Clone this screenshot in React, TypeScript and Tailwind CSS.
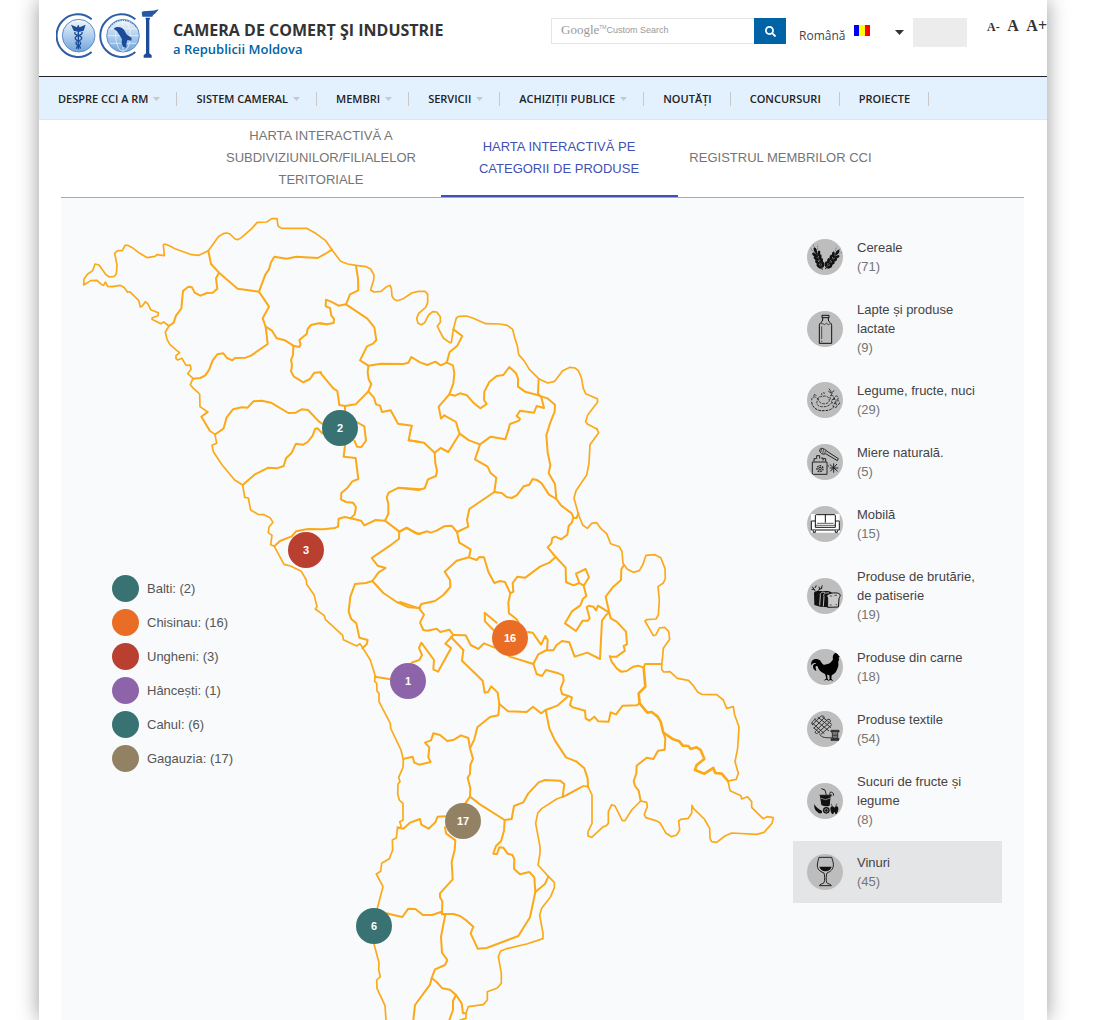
import { useState } from "react";
import type { ReactNode } from "react";
import { FaSearch } from "react-icons/fa";

interface MapSheet {
  id: string;
  transform: string;
  outline: string[];
  borders: string[];
}

// Country outline and district borders, drawn sheet by sheet at three times the map size
const SHEETS: MapSheet[] = [
  {
    id: "north-west",
    transform: "translate(14 12) scale(0.33333)",
    outline: [
      "M400 122 L372 136 350 134 300 116 283 107 270 102 265 104 268 137 246 134 240 139 217 143 194 130 172 113 158 106 150 106 142 122 128 122 119 130 126 165 124 192 118 199 103 201 92 193 72 165 60 162 53 182 38 192 27 207 26 225 47 212 66 211 80 224 86 226 91 216 98 229 112 230 135 226 147 232 158 247 164 245 191 271 196 291 202 288 211 275 219 282 227 299 250 308 249 317 231 324 231 328 257 341 266 336 282 348",
      "M282 348 L271 366 276 388 285 404 305 421 314 428 303 437 303 446 308 450 321 445 333 466 346 465 348 478 338 491 354 505 346 524 356 536 374 552 375 590 398 606 379 620 403 660",
      "M400 122 L430 80 447 70 456 69 465 72 480 87 489 89 500 82 530 56 547 37 575 36 590 26 606 26 609 48 620 55 695 55 722 70 752 92 771 119",
    ],
    borders: [
      "M771 119 L755 129 728 144 664 140 635 146 598 140 588 157 582 178 571 194 552 245",
      "M400 122 L408 162 432 188 488 236 552 245 582 290 563 325 572 350 578 402 528 437 512 443 480 444 472 451 456 444 445 430 427 433 413 451 403 478 391 496 376 504 354 506",
      "M432 188 L423 205 427 236 413 248 396 249 376 257 359 248 351 232 340 230 324 243 319 296 303 317 296 338 282 348",
      "M572 350 L591 362 605 385 630 391 655 407 673 411 677 403 673 390 695 372 698 357 708 345 731 340 755 343",
      "M655 407 L654 435 648 450 651 465 648 484 657 500 685 517 705 507 718 488 738 487",
      "M440 660 L446 655 455 622 474 598 500 592 518 593 535 574 561 572 588 578 640 609 662 608 680 598 699 600 732 635 745 643",
    ],
  },
  {
    id: "north-east",
    transform: "translate(259 12) scale(0.33333)",
    outline: [
      "M36 120 L62 154 83 162 108 166 138 170 152 177 162 195 161 210 152 240 162 246 183 244 200 230 210 226 214 235 216 258 222 268 232 272 250 266 275 249 295 244 315 244 323 253 323 278 317 292 296 310 290 325 294 340 304 344 314 338 326 315 338 305 350 306 361 320 361 337 352 349 370 384 389 398 394 398 400 358 409 324 416 319 440 318 460 325 497 341 540 342 562 346 578 358 584 383 592 407 596 434 612 452 628 478 656 506 683 519 704 514 728 482 750 472 765 474 775 482 784 502 790 535 797 551 832 566 833 576 803 615 797 635 802 642 832 658",
    ],
    borders: [
      "M108 168 L114 205 115 241 90 253 78 283 56 287 33 275 18 269 17 289 30 294 34 317 42 327 41 339 20 343 0 340",
      "M78 283 L142 326 163 352 169 390 159 401 141 409 120 451 145 467 183 461 250 462 265 458 274 441 300 457 322 465 346 455 362 466 380 458 389 426 412 407 427 378 400 358",
      "M380 458 L399 466 403 490 400 520 388 553 405 557 420 550 441 556 462 580 481 595 500 582 492 570 493 545 508 516 530 498 550 495 568 471 588 490 594 505 594 530 615 545 655 556 682 565 705 584 704 605 690 640 684 660",
      "M656 506 L654 550 664 562 672 594 650 588 642 608 600 602 590 618 600 626 597 632 570 642 565 660",
      "M388 553 L356 590 363 626 373 616 408 636 415 660",
      "M145 467 L143 487 146 508 154 522 145 544 107 583 75 588 58 585 52 543 40 535 0 487",
      "M145 544 L162 563 168 583 180 587 186 606 212 601 234 641 276 647 272 660",
      "M75 588 V602",
    ],
  },
  {
    id: "west",
    transform: "translate(129 202) scale(0.33333)",
    outline: [
      "M53 37 L34 50 60 93 75 103 80 130 66 136 70 155 96 194 134 240 158 255 164 292 175 294 182 330 204 343 222 344 240 353 249 367 237 381 235 398 246 406 242 434 253 439 282 493 302 498 334 514 349 540 350 553 372 584 381 620 376 627 403 647 406 658 458 706 460 719 500 738 510 731 541 780",
    ],
    borders: [
      "M75 103 L95 90",
      "M397 100 L383 85 375 87 368 107 353 126 340 134 318 131 304 160 288 175 281 198 261 205 235 203 195 223 158 255",
      "M500 66 L523 79 528 122 514 141 501 140 493 122",
      "M465 136 L461 170 497 174 505 237 487 244 472 264 454 279 453 298 468 306 489 308 498 322 494 343 482 355 464 351 446 356 444 380 434 384 400 388 354 387 318 394 305 409 270 423 253 439",
      "M482 355 L513 362 523 376 557 360 585 362 595 342 595 312 590 292 596 278 626 263 690 268",
      "M585 362 L628 395 627 416 600 437 545 474 563 497 587 504 566 517 547 543 528 549 495 552 481 590 476 635 483 656 499 670 508 713 533 720 530 733 517 745",
      "M547 543 L580 579 620 606 656 622 690 624",
      "M628 395 L650 383 675 399 690 402",
      "M662 90 L656 121 690 126",
    ],
  },
  {
    id: "center",
    transform: "translate(339 202) scale(0.33333)",
    outline: [
      "M590 86 L596 98 570 134 567 190 560 225 528 272 522 295 536 345 548 375 562 385 575 370 590 368 602 385 620 401 632 431 658 440 666 455 669 490 682 508 700 517 718 512 728 495 738 466 765 464 782 473 795 505 796 535 790 549 774 560 778 600 775 645 768 657 740 659 735 663 760 707 768 704 778 684 794 682 806 694 809 718 790 745 787 780",
    ],
    borders: [
      "M26 121 L72 128 104 158 122 144 145 156 179 101 175 90",
      "M104 158 L106 190 111 212 108 228 84 238 74 265 55 270 0 264",
      "M179 101 L207 121 240 133 225 178 263 200 271 218 289 233 283 276 208 327 201 360 205 380 171 396 155 377 132 379 110 392 92 398 82 394 55 402 20 384 0 394",
      "M240 133 L272 110 316 118 325 90",
      "M444 90 L439 105 443 157 451 195 446 220 465 252 469 297",
      "M283 276 L305 279 320 291 335 294 350 286 371 259 388 254 398 237 413 241 425 250 447 284 469 297 483 316 515 340 521 354 530 354 535 340",
      "M519 354 L516 367 506 378 502 404 484 418 466 410 457 414 454 430 443 442 467 471 448 488 420 500 376 533 352 530 338 549 340 575 331 580 325 608 327 640 350 658 356 668",
      "M467 471 L497 503 498 546 520 556 538 549 528 521 557 507 567 532 551 557 559 588 549 596 541 616 516 634 495 670 528 693 548 662 564 662 569 655 560 622 566 617 580 620 588 631 594 617 628 638 617 590 640 560 663 540 664 508 672 495",
      "M538 549 L551 557",
      "M171 396 L178 428 212 448 207 472 170 482 134 515 150 540 151 561 130 585 105 603 64 612 57 625 0 606",
      "M207 472 L230 480 238 471 252 472 265 515 283 549 300 543 315 546 331 580",
      "M57 625 L72 644 60 668 70 690 82 692 110 686 121 696 148 689 160 705 136 731 153 744",
      "M160 705 L197 706 212 735 235 747 252 730 284 743",
      "M153 711 L190 750",
      "M280 690 L255 664 254 638 290 668",
      "M384 696 L398 698 423 734 436 708 443 720 441 751 460 751 470 735 486 723 508 727 524 770 562 758 600 777 606 662 618 645 628 638 632 655 650 665 678 695 681 733 671 738 675 752 650 770 630 770",
    ],
  },
  {
    id: "south",
    transform: "translate(299 442) scale(0.33333)",
    outline: [
      "M31 60 L45 105 44 124 50 130 51 153 57 160 57 185 91 250 92 265 123 330 130 360 129 382 116 412 120 425 114 432 113 462 118 480 129 491 129 541 119 545 124 560 112 567 109 594 97 600 98 630 88 656 65 670 62 694 49 702 69 740 52 805",
      "M42 912 L57 968 56 990 61 1010 50 1020 51 1045 75 1097 78 1140",
      "M660 443 L620 466 590 477 545 506 533 520 527 550 540 620 540 640 534 675 565 709 583 727 583 743 572 770 545 805 539 825 549 880 549 896 500 912 440 926 422 933 415 950 424 1000 424 1030 412 1044 382 1055 382 1080 370 1094 325 1100 318 1120 318 1135 300 1140",
    ],
    borders: [
      "M45 110 L92 118",
      "M155 68 L178 60 186 45 177 24 184 8 222 60 220 88 234 95 273 25",
      "M310 30 L306 62 368 122 374 158 384 156 394 139 413 158 418 192 415 226 390 231 352 262 343 298 330 325",
      "M418 192 L444 214 500 216 519 200 543 220 557 210 592 197 625 168 606 162 602 145 611 122 609 106 595 100 558 90 546 108 530 102 520 72",
      "M447 49 L520 72 535 43 560 30",
      "M557 210 L568 265 585 302 618 352 648 364",
      "M130 357 L158 350 163 368 178 374 212 366 205 352 208 322 195 308 213 301 220 280 240 285 262 303 282 299 303 286 325 294 330 325 339 356 331 375 330 402 323 413 331 445 330 470 316 490",
      "M330 470 L360 493 434 540 432 572 423 604 408 618 400 641 411 642 418 622 430 623 443 641 457 645 463 657 462 686 480 703 508 696 523 712 526 756 510 832 475 888 380 924 353 926 332 880 340 860 320 842 300 828 280 822 246 822 243 816 216 825 189 825 166 807 145 806 127 831 97 824 80 820",
      "M434 540 L455 537 462 498 490 487 505 460 536 427 555 420 600 422 613 432 608 470",
      "M565 709 L555 732 526 756",
      "M112 562 L130 566 150 548 180 537 184 554 206 566 226 547 233 530 255 529",
      "M255 562 L258 580 286 601 284 630 275 665 278 718 240 760 240 772 247 784 246 822 256 824 243 890 246 938 262 960 255 975 225 988 215 1014 210 1034 165 1095 160 1140",
      "M215 1014 L230 1026 247 1045 270 1049 288 1065 305 1090 309 1120 318 1120",
      "M288 1065 L279 1082 279 1110 268 1140",
    ],
  },
  {
    id: "south-east",
    transform: "translate(499 402) scale(0.33333)",
    outline: [
      "M307 178 L305 195 305 208 311 216 330 215 352 235 385 241 400 257 413 276 425 283 470 284 490 300 500 325 520 320 524 345 537 380 533 445 525 485 535 520 529 538 504 543 510 572 543 587 545 597 562 590 575 605 575 622 609 656 622 650 640 653 636 670 612 697 590 703 515 699 495 708 470 727 455 725 450 715 449 685 433 657 400 625 396 616 395 640 385 655 362 658 356 663 359 690 350 705 335 710 318 700 300 668 285 661 257 653 253 643 262 620 260 607 242 603 215 630 195 662 187 662 165 618 155 614 145 635 145 670 138 678 130 680 95 712 84 708 84 695 96 670 96 585 84 560 70 558 8 591",
    ],
    borders: [
      "M84 560 L83 535 73 505 50 485",
      "M305 192 L255 192 251 203 235 197 220 200 200 213 183 215 170 205 155 185 149 168",
      "M310 398 L316 415 314 449 294 452 280 477 260 473 230 497 229 520 221 543 225 558 236 572 242 603",
      "M239 310 L230 316 188 317 168 343 152 337 146 365 115 364 103 350 88 362 77 355 75 332 38 322 30 315 36 292 25 288",
    ],
  },
];

// Nistru security zone, drawn heavier than the rest
const SECURITY_ZONE =
  "M251 203 L256 260 236 280 239 310 262 338 275 336 293 350 302 365 310 398 340 418 358 424 368 437 385 438 392 447 410 442 422 450 433 477 410 495 405 510 433 521 460 504 466 519 485 521 504 543";

const NAV_ITEMS = [
  { label: "DESPRE CCI A RM", menu: true },
  { label: "SISTEM CAMERAL", menu: true },
  { label: "MEMBRI", menu: true },
  { label: "SERVICII", menu: true },
  { label: "ACHIZIȚII PUBLICE", menu: true },
  { label: "NOUTĂȚI", menu: false },
  { label: "CONCURSURI", menu: false },
  { label: "PROIECTE", menu: false },
];

const TABS = [
  { label: "HARTA INTERACTIVĂ A SUBDIVIZIUNILOR/FILIALELOR TERITORIALE", width: "w-[239px]" },
  { label: "HARTA INTERACTIVĂ PE CATEGORII DE PRODUSE", width: "w-[237px]" },
  { label: "REGISTRUL MEMBRILOR CCI", width: "w-[206px]" },
];

const REGIONS = [
  { name: "Balti", count: 2, color: "bg-[#397273]", pin: "left-[261px] top-[212px]" },
  { name: "Chisinau", count: 16, color: "bg-[#e96d24]", pin: "left-[431px] top-[422px]" },
  { name: "Ungheni", count: 3, color: "bg-[#b93f30]", pin: "left-[227px] top-[334px]" },
  { name: "Hâncești", count: 1, color: "bg-[#8d63aa]", pin: "left-[329px] top-[465px]" },
  { name: "Cahul", count: 6, color: "bg-[#397273]", pin: "left-[295px] top-[710px]" },
  { name: "Gagauzia", count: 17, color: "bg-[#938163]", pin: "left-[384px] top-[605px]" },
];

function WheatEar({ transform }: { transform: string }) {
  return (
    <g transform={transform}>
      <path d="M0 0 V-50" stroke="#111" strokeWidth="3" />
      {[-12, -23, -34, -45].map((y) => (
        <g key={y} fill="#111">
          <ellipse cx="-6" cy={y} rx="4" ry="8" transform={`rotate(-28 -6 ${y})`} />
          <ellipse cx="6" cy={y} rx="4" ry="8" transform={`rotate(28 6 ${y})`} />
        </g>
      ))}
      <ellipse cx="0" cy="-56" rx="4" ry="8" fill="#111" />
      <path d="M-7 -56 L-11 -68 M0 -64 V-74 M7 -56 L11 -68" stroke="#555" strokeWidth="2" strokeDasharray="3 3" />
    </g>
  );
}

const icons: Record<string, ReactNode> = {
  cereale: (
    <>
      <WheatEar transform="translate(46 92) rotate(-20) scale(1.1)" />
      <WheatEar transform="translate(55 90) rotate(36) scale(1.1)" />
    </>
  ),
  lapte: (
    <g stroke="#111" strokeWidth="3" strokeLinejoin="round">
      <path d="M45 13 H66 V20 H45 Z" />
      <path d="M47 20 V27 C47 33 37 35 37 43 V97 H74 V43 C74 35 64 33 64 27 V20" />
      <path d="M41 38 H48 L52 41 L58 37 L64 41 L70 38" strokeWidth="2" />
      <path d="M44 46 V84 M44 89 V93" strokeWidth="2" />
    </g>
  ),
  legume: (
    <g stroke="#222" strokeWidth="2.5" strokeDasharray="8 3">
      <path d="M14 55 C14 40 26 44 33 51 C24 66 34 74 44 74 C58 76 70 70 76 60" />
      <path d="M34 54 C32 42 40 44 46 44 C54 40 66 42 67 55 C66 68 40 70 34 54" />
      <path d="M14 60 C16 80 34 88 52 86 C70 86 78 78 82 72" strokeWidth="3" />
      <path d="M46 40 C40 34 46 30 54 34 M20 42 L24 36 L28 42" />
      <path d="M66 20 L74 32 L82 26 M64 28 L74 34 M76 34 L70 42" strokeDasharray="none" />
      <circle cx="75" cy="47" r="6" />
      <circle cx="88" cy="48" r="6" />
      <circle cx="80" cy="58" r="6" />
      <circle cx="92" cy="62" r="6" />
      <circle cx="84" cy="71" r="6" />
    </g>
  ),
  miere: (
    <g stroke="#222" strokeWidth="3" strokeLinejoin="round">
      <path d="M16 54 H60 V91 H19 Q16 91 16 86 Z" />
      <path d="M21 53 V44 H28 M56 53 V44 H48 M29 44 V35 H38 V44 M42 42 H48 V50" />
      <circle cx="39" cy="74" r="4" />
      <circle cx="39" cy="74" r="9" strokeDasharray="5 3" strokeWidth="4" />
      <path d="M38 18 C40 10 50 12 60 22 L94 44 L91 50 L56 29 C46 34 38 26 38 18 Z" />
      <path d="M44 14 L42 24 M50 15 L47 29 M56 19 L53 29" strokeWidth="2" />
      <path d="M62 66 H66 M68 61 L92 82 M70 82 L90 60 M80 58 V86 M68 72 H94" />
    </g>
  ),
  mobila: (
    <g stroke="#111" strokeWidth="3" strokeLinejoin="round" fill="#fff">
      <path d="M12 24 H98 V80 H12 Z" stroke="none" />
      <path d="M25 45 V29 Q25 26 28 26 H82 Q85 26 85 29 V45" />
      <path d="M55 26 V50" />
      <path d="M13 45 H25 V64 H85 V45 H97 Q98 45 97 50 V72 H13 V47 Z" />
      <path d="M30 52 H80 M25 58 H85" strokeWidth="2" />
      <path d="M19 73 V79 H25 V73 M85 73 V79 H91 V73" />
    </g>
  ),
  brutarie: (
    <>
      <path d="M21 46 C20 38 40 38 46 40 C54 38 66 38 74 43 L66 88 L40 86 L22 81 Z" fill="#111" />
      <g stroke="#bdbdbd" strokeWidth="3">
        <path d="M54 43 C42 42 38 46 40 54 L38 82 M66 45 C54 43 48 48 51 56 L49 85" />
      </g>
      <path d="M60 56 C56 44 92 42 98 48 C102 54 97 58 96 62 L94 87 L62 88 L62 60 Z" stroke="#111" strokeWidth="3" fill="#c9c9c9" />
      <path d="M68 54 H76 M82 52 H90 M68 81 H74 M86 80 H90" stroke="#111" strokeWidth="2" />
      <path d="M25 40 L16 26 M22 34 L14 34 M24 30 L28 22 M32 38 L46 30 M38 34 L36 26 M42 32 L46 22" stroke="#222" strokeWidth="3" />
    </>
  ),
  carne: (
    <path
      fill="#000"
      d="M13 50 C10 36 20 28 32 31 C44 33 43 48 52 47 C66 46 72 42 78 31 C76 22 80 14 84 13 C88 10 94 14 94 18 L99 22 L95 26 C96 31 97 34 94 37 C93 42 96 48 93 54 C89 68 83 75 74 79 L73 89 L79 96 L70 93 L63 96 L68 90 L67 79 L60 77 L62 90 L66 95 L58 92 L50 95 L58 88 L54 75 C44 71 37 66 34 58 C32 52 31 50 26 52 C25 58 28 62 28 66 C20 63 16 56 19 48 C22 44 26 45 28 44 C22 40 15 43 13 50 Z"
    />
  ),
  textile: (
    <g stroke="#333" strokeWidth="3">
      <path d="M18 31 L27 22 M16 42 L40 17 M20 52 L52 20 M26 60 L62 25 M32 66 L70 32 M42 70 L74 42" />
      <path d="M22 24 L66 60 M32 18 L72 50 M46 18 L74 40 M16 36 L52 68 M20 50 L40 68" />
      <path d="M18 31 C12 36 14 40 18 42 M40 17 C46 12 52 16 52 20 M62 25 C68 24 72 28 70 32 M26 60 C22 66 28 70 32 66" />
      <path d="M38 70 C44 80 56 81 74 80" />
      <path d="M72 58 H96 V63 H72 Z M72 83 H96 V88 H72 Z" fill="#333" />
      <path d="M76 64 V82 H92 V64 M76 69 H92 M76 73 H92 M76 78 H92" />
    </g>
  ),
  sucuri: (
    <>
      <path d="M39 39 H71 L68 68 Q55 72 43 66 Z" fill="#111" />
      <path d="M38 37 H72" stroke="#222" strokeWidth="4" />
      <path d="M58 36 L54 21 L43 17 M68 28 C76 26 80 30 80 38 M66 33 C71 32 75 36 74 40" stroke="#222" strokeWidth="3" />
      <path d="M42 46 L56 50 L70 45" stroke="#bdbdbd" strokeWidth="2" />
      <path d="M22 62 C26 74 38 78 45 84 C48 92 38 94 32 88 C24 82 20 74 22 62 Z" fill="#111" />
      <circle cx="58" cy="82" r="10" fill="#111" />
      <circle cx="58" cy="82" r="5" stroke="#bdbdbd" strokeWidth="2" />
      <path d="M70 74 C76 66 80 72 82 74 C86 68 94 68 94 76 C94 84 90 94 86 94 L82 86 L78 94 C72 92 70 82 70 74 Z" fill="#111" />
      <path d="M76 70 L72 62 M86 70 L90 62" stroke="#222" strokeWidth="2" />
    </>
  ),
  vinuri: (
    <>
      <path d="M36 10 H74 C78 22 80 30 79 36 C77 50 66 54 60 57 C57 62 57 80 59 86 C62 90 72 90 73 95 H37 C38 90 48 90 51 86 C54 80 53 62 51 57 C44 54 32 50 31 36 C31 28 33 20 36 10 Z" stroke="#222" strokeWidth="3" />
      <path d="M37 38 H74 C72 46 65 51 55 52 C46 51 39 46 37 38 Z" fill="#111" />
    </>
  ),
};

const CATEGORIES = [
  { icon: "cereale", name: "Cereale", count: 71 },
  { icon: "lapte", name: "Lapte și produse lactate", count: 9 },
  { icon: "legume", name: "Legume, fructe, nuci", count: 29 },
  { icon: "miere", name: "Miere naturală.", count: 5 },
  { icon: "mobila", name: "Mobilă", count: 15 },
  { icon: "brutarie", name: "Produse de brutărie, de patiserie", count: 19 },
  { icon: "carne", name: "Produse din carne", count: 18 },
  { icon: "textile", name: "Produse textile", count: 54 },
  { icon: "sucuri", name: "Sucuri de fructe și legume", count: 8 },
  { icon: "vinuri", name: "Vinuri", count: 45 },
];

function Logo() {
  return (
    <svg viewBox="79 24 309 153" className="h-[51px] w-[103px] shrink-0" fill="none" aria-hidden="true">
      <defs>
        <linearGradient id="disc" x1="0" y1="0" x2="0" y2="1">
          <stop offset="0" stopColor="#f2f8fd" />
          <stop offset="1" stopColor="#6fa5db" />
        </linearGradient>
      </defs>
      <g stroke="#2d5ea6" strokeWidth="6">
        <path d="M186 58 A64 64 0 1 0 186 156" />
        <path d="M317 58 A64 64 0 1 0 317 156" />
      </g>
      <circle cx="147" cy="107" r="49" fill="url(#disc)" stroke="#5d8cc8" strokeWidth="3" />
      <circle cx="280" cy="107" r="49" fill="url(#disc)" stroke="#5d8cc8" strokeWidth="3" />
      {/* Caduceus */}
      <path d="M124 74 L142 82 L146 76 L150 82 L168 74 L162 92 L148 96 L132 92 Z" fill="#1c4c98" />
      <path d="M146 76 V148" stroke="#1c4c98" strokeWidth="4" />
      <path d="M136 96 C130 108 160 106 156 116 C154 124 138 122 139 130 C140 138 154 136 152 146 M157 96 C162 108 132 106 137 116 C140 124 154 122 153 130 C152 138 140 136 140 146" stroke="#1c4c98" strokeWidth="4" />
      {/* Globe */}
      <g stroke="#f1f7fd" strokeWidth="2">
        <ellipse cx="280" cy="107" rx="22" ry="47" />
        <path d="M280 60 V154 M234 107 H327 M240 86 H320 M240 130 H320" />
      </g>
      <path d="M238 84 A50 50 0 0 1 322 84" stroke="#4b7cbc" strokeWidth="4" strokeDasharray="4 3" />
      <path d="M252 86 C258 80 268 80 277 84 C286 90 286 98 292 104 L306 113 L305 122 L293 120 L290 132 L290 143 L280 140 L276 130 L277 118 L270 106 L262 94 Z" fill="#1c4c98" />
      {/* Column */}
      <path d="M336 36 C352 30 368 36 386 28 C384 36 376 38 378 40 C372 44 370 44 368 50 L338 50 Z" fill="#2457a5" />
      <path d="M347 53 H362 L359 60 V160 L366 166 V173 H342 V166 L349 160 V60 Z" fill="#1c4c98" />
    </svg>
  );
}

function Header() {
  return (
    <header className="flex h-[77px] items-start border-b border-[#222] font-['Open_Sans',sans-serif]">
      <a href="#" className="ml-[17px] mt-2 flex items-start gap-[14px]">
        <Logo />
        <span className="mt-2 flex flex-col whitespace-nowrap">
          <span className="text-base font-bold leading-7 text-[#333]">CAMERA DE COMERȚ ŞI INDUSTRIE</span>
          <span className="text-[13px] font-semibold leading-[11px] text-[#0063a6]">a Republicii Moldova</span>
        </span>
      </a>

      <form className="relative ml-auto mt-[18px] flex" onSubmit={(e) => e.preventDefault()}>
        <input id="q" type="text" className="h-[26px] w-[203px] border border-r-0 border-[#e5e5e5] px-2 text-xs outline-none" />
        <label htmlFor="q" className="absolute left-[10px] top-1 flex items-center whitespace-nowrap text-[#999]">
          <span className="font-['Liberation_Serif',serif] text-[13px] leading-4">Google</span>
          <span className="mb-1 text-[5px]">TM</span>
          <span className="font-['Liberation_Sans',sans-serif] text-[9px] leading-4">Custom Search</span>
        </label>
        <button type="submit" aria-label="Caută" className="flex h-[26px] w-8 items-center justify-center bg-[#0063a6] text-[11px] text-white">
          <FaSearch />
        </button>
      </form>

      <div className="relative ml-[13px] mt-[22px] w-[114px]">
        <select aria-label="Limba" className="h-5 w-full appearance-none bg-transparent text-xs text-[#444] outline-none">
          <option>Română</option>
        </select>
        <svg viewBox="0 0 16 11" className="pointer-events-none absolute left-[55px] top-[3px] h-[11px] w-4" aria-hidden="true">
          <path fill="#0000f0" d="M0 0h5v11H0z" />
          <path fill="#ff0" d="M5 0h6v11H5z" />
          <path fill="#f00" d="M11 0h5v11h-5z" />
        </svg>
        <svg viewBox="0 0 9 5" className="pointer-events-none absolute right-[9px] top-2 h-[5px] w-[9px]" aria-hidden="true">
          <path fill="#333" d="M0 0h9L4.500 5z" />
        </svg>
      </div>

      <div className="mt-[18px] h-[29px] w-[54px] bg-[#ececec]" />

      <div className="ml-5 mt-[14px] flex w-[60px] items-baseline justify-between whitespace-nowrap font-['Liberation_Serif',serif] font-bold leading-[18px] text-[#333]">
        <button className="text-xs">A-</button>
        <button className="text-base">A</button>
        <button className="text-base">A+</button>
      </div>
    </header>
  );
}

function Nav() {
  return (
    <nav className="flex h-[43px] items-center border-b border-[#e5e5e5] bg-[#e3f1ff] pt-0.5 font-['Open_Sans',sans-serif]">
      {NAV_ITEMS.map((item) => (
        <a
          key={item.label}
          href="#"
          className={`flex h-[14px] items-center gap-[5px] whitespace-nowrap border-r border-[#c8c8c8] pl-[19px] text-[11px] font-semibold text-[#222] ${
            item.menu ? "pr-4" : "pr-[18px]"
          }`}
        >
          {item.label}
          {item.menu && (
            <svg viewBox="0 0 7 4" className="h-1 w-[7px]" aria-hidden="true">
              <path fill="#c8c8c8" d="M0 0h7L3.500 4z" />
            </svg>
          )}
        </a>
      ))}
    </nav>
  );
}

function RegionMap() {
  return (
    <div className="relative w-[732px] shrink-0">
      <svg viewBox="0 0 732 822" className="block w-full" fill="none" stroke="#fba919" strokeLinecap="round" strokeLinejoin="round" aria-label="Harta Moldovei">
        {SHEETS.map((sheet) => (
          <g key={sheet.id} transform={sheet.transform}>
            {sheet.outline.map((d) => (
              <path key={d} d={d} strokeWidth="5" />
            ))}
            {sheet.borders.map((d) => (
              <path key={d} d={d} strokeWidth="6" />
            ))}
          </g>
        ))}
        <path d={SECURITY_ZONE} transform="translate(499 402) scale(0.33333)" strokeWidth="8" />
      </svg>

      {/* Pins */}
      {REGIONS.map((region) => (
        <button
          key={region.name}
          aria-label={region.name}
          className={`absolute flex size-9 items-center justify-center rounded-full text-[11px] font-bold text-white ${region.color} ${region.pin}`}
        >
          {region.count}
        </button>
      ))}

      {/* Legend */}
      <ul className="absolute left-[51px] top-[377px] flex flex-col gap-[7px]">
        {REGIONS.map((region) => (
          <li key={region.name} className="flex items-center gap-2 text-[13px] text-[#555]">
            <span className={`size-[27px] rounded-full ${region.color}`} />
            {region.name}: ({region.count})
          </li>
        ))}
      </ul>
    </div>
  );
}

function App() {
  const [tab, setTab] = useState(1);
  const [category, setCategory] = useState("vinuri");

  return (
    <div className="overflow-x-hidden bg-white">
      <div className="ml-[39px] mr-[70px] min-h-screen bg-white font-['Liberation_Sans',Arial,sans-serif] shadow-[0_0_20px_rgba(0,0,0,0.4)]">
        <Header />
        <Nav />

        <main className="ml-[22px] mr-[23px]">
          {/* Tabs */}
          <div role="tablist" className="flex justify-center border-b border-[#aaa]">
            {TABS.map((t, i) => (
              <button
                key={t.label}
                role="tab"
                aria-selected={tab === i}
                onClick={() => setTab(i)}
                className={`flex h-[77px] items-center justify-center border-b-2 px-2 text-center text-[13px] leading-[22px] ${t.width} ${
                  tab === i ? "border-[#3f51b5] text-[#3f51b5]" : "border-transparent text-[#757575]"
                }`}
              >
                {t.label}
              </button>
            ))}
          </div>

          <div className="flex justify-between bg-[#f8fafc] pr-[22px]">
            <RegionMap />

            {/* Categories */}
            <ul className="mt-7 w-[209px] shrink-0">
              {CATEGORIES.map((c) => (
                <li key={c.icon}>
                  <button
                    onClick={() => setCategory(c.icon)}
                    className={`flex w-full items-center gap-[14px] px-[14px] py-3 text-left text-[13px] leading-[19px] ${
                      category === c.icon ? "bg-[#e4e5e7]" : ""
                    }`}
                  >
                    <svg viewBox="0 0 108 108" className="size-9 shrink-0 rounded-full bg-[#bdbdbd]" fill="none" aria-hidden="true">
                      {icons[c.icon]}
                    </svg>
                    <span className="text-[#444]">
                      {c.name}
                      <span className="block text-[#757575]">({c.count})</span>
                    </span>
                  </button>
                </li>
              ))}
            </ul>
          </div>
        </main>
      </div>
    </div>
  );
}

export default App;
